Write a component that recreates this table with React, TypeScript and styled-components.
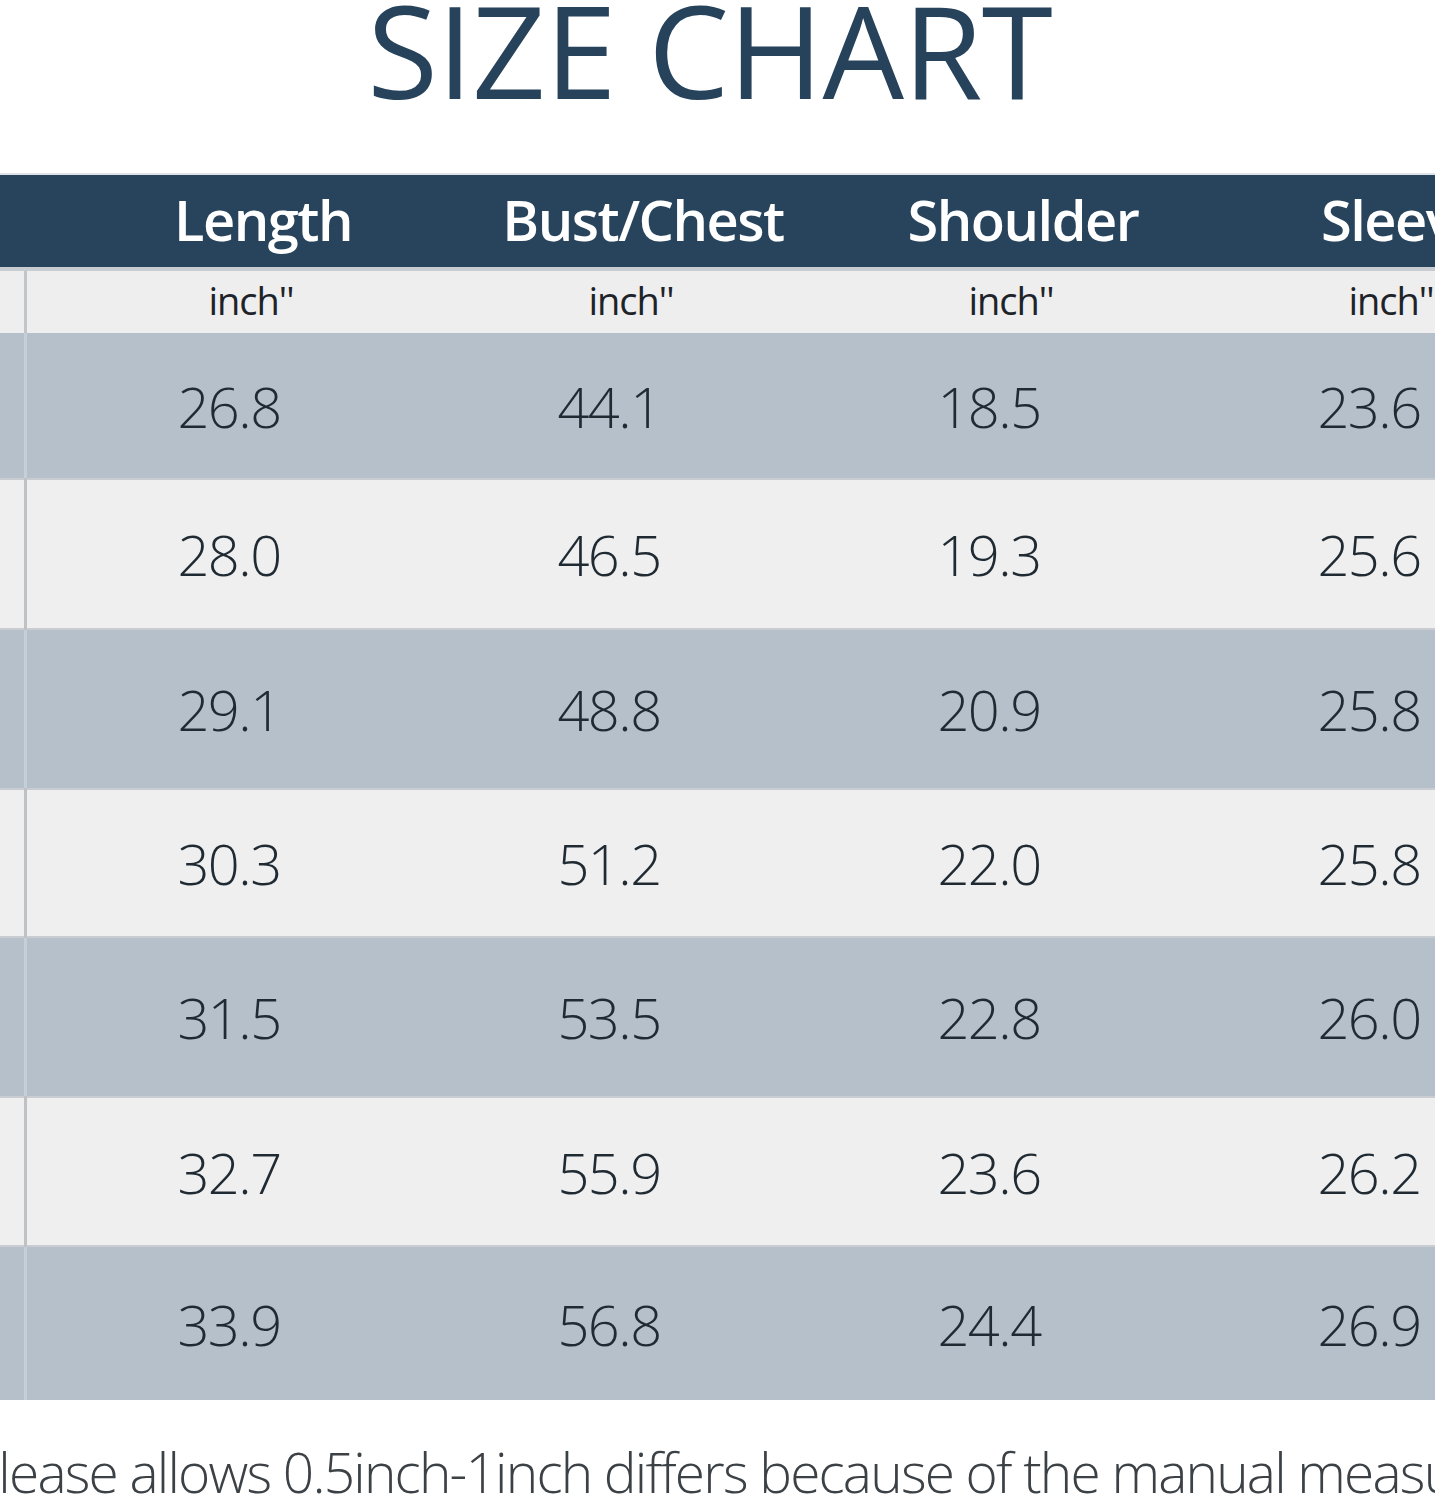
import React from "react";
import styled, { createGlobalStyle } from "styled-components";

const GlobalStyle = createGlobalStyle`
  body {
    margin: 0;
    background: #ffffff;
    overflow: hidden;
  }
`;

const Page = styled.div`
  width: 1435px;
  height: 1500px;
  overflow: hidden;
  background: #ffffff;
  font-family: "Open Sans", "Noto Sans", sans-serif;
`;

const TitleWrap = styled.div`
  display: flow-root;
  height: 175px;
  border-bottom: 2px solid #dfe3e6;
  box-sizing: border-box;
`;

const Title = styled.h1`
  margin: -15px 0 0;
  padding-right: 16px;
  text-align: center;
  font-size: 129px;
  line-height: 1;
  font-weight: 400;
  letter-spacing: -1px;
  color: #27435c;
`;

const Row = styled.div<{ $tone: "head" | "unit" | "dark" | "light"; $h: number }>`
  display: grid;
  grid-template-columns: 27px repeat(4, 380px);
  height: ${(p) => p.$h}px;
  box-sizing: border-box;
  background: ${(p) =>
    p.$tone === "head"
      ? "#28445d"
      : p.$tone === "dark"
      ? "#b6c0ca"
      : p.$tone === "unit"
      ? "#eeeeee"
      : "#efefef"};
  border-bottom: ${(p) => (p.$tone === "head" ? "4px solid #c8cdd2" : "none")};
  box-shadow: ${(p) =>
    p.$tone === "light" ? "inset 0 2px 0 #c9cdd1, inset 0 -2px 0 #c9cdd1" : "none"};
`;

const Side = styled.div<{ $line?: string }>`
  box-sizing: border-box;
  border-right: ${(p) => (p.$line ? `3px solid ${p.$line}` : "none")};
`;

const HeadCell = styled.div`
  display: flex;
  align-items: center;
  justify-content: center;
  padding-left: 92px;
  padding-bottom: 4px;
  white-space: nowrap;
  font-size: 56px;
  font-weight: 600;
  letter-spacing: -1.5px;
  color: #ffffff;
`;

const UnitCell = styled.div`
  display: flex;
  align-items: center;
  justify-content: center;
  padding-left: 68px;
  padding-bottom: 4px;
  white-space: nowrap;
  font-size: 38px;
  font-weight: 400;
  letter-spacing: -1px;
  color: #1d2328;
`;

const DataCell = styled.div`
  display: flex;
  align-items: center;
  justify-content: center;
  padding-left: 24px;
  white-space: nowrap;
  font-size: 56px;
  font-weight: 300;
  letter-spacing: -1.5px;
  color: #1f2a33;
`;

const Note = styled.p`
  margin: 44px 0 0 -32px;
  white-space: nowrap;
  font-size: 55px;
  line-height: 1;
  font-weight: 300;
  letter-spacing: -1.8px;
  color: #3c4146;
`;

const columns = ["Length", "Bust/Chest", "Shoulder", "Sleeve"];

const rows = [
  { h: 145, values: ["26.8", "44.1", "18.5", "23.6"] },
  { h: 152, values: ["28.0", "46.5", "19.3", "25.6"] },
  { h: 158, values: ["29.1", "48.8", "20.9", "25.8"] },
  { h: 150, values: ["30.3", "51.2", "22.0", "25.8"] },
  { h: 158, values: ["31.5", "53.5", "22.8", "26.0"] },
  { h: 151, values: ["32.7", "55.9", "23.6", "26.2"] },
  { h: 153, values: ["33.9", "56.8", "24.4", "26.9"] },
];

const App: React.FC = () => {
  return (
    <Page>
      <GlobalStyle />
      <TitleWrap>
        <Title>SIZE CHART</Title>
      </TitleWrap>
      <Row $tone="head" $h={96}>
        <Side />
        {columns.map((c) => (
          <HeadCell key={c}>{c}</HeadCell>
        ))}
      </Row>
      <Row $tone="unit" $h={62}>
        <Side $line="#c3c6c9" />
        {columns.map((c) => (
          <UnitCell key={c}>inch''</UnitCell>
        ))}
      </Row>
      {rows.map((r, i) => {
        const dark = i % 2 === 0;
        return (
          <Row key={i} $tone={dark ? "dark" : "light"} $h={r.h}>
            <Side $line={dark ? "#c6cfd8" : "#bfc2c5"} />
            {r.values.map((v, j) => (
              <DataCell key={j}>{v}</DataCell>
            ))}
          </Row>
        );
      })}
      <Note>Please allows 0.5inch-1inch differs because of the manual measurement</Note>
    </Page>
  );
};

export default App;
